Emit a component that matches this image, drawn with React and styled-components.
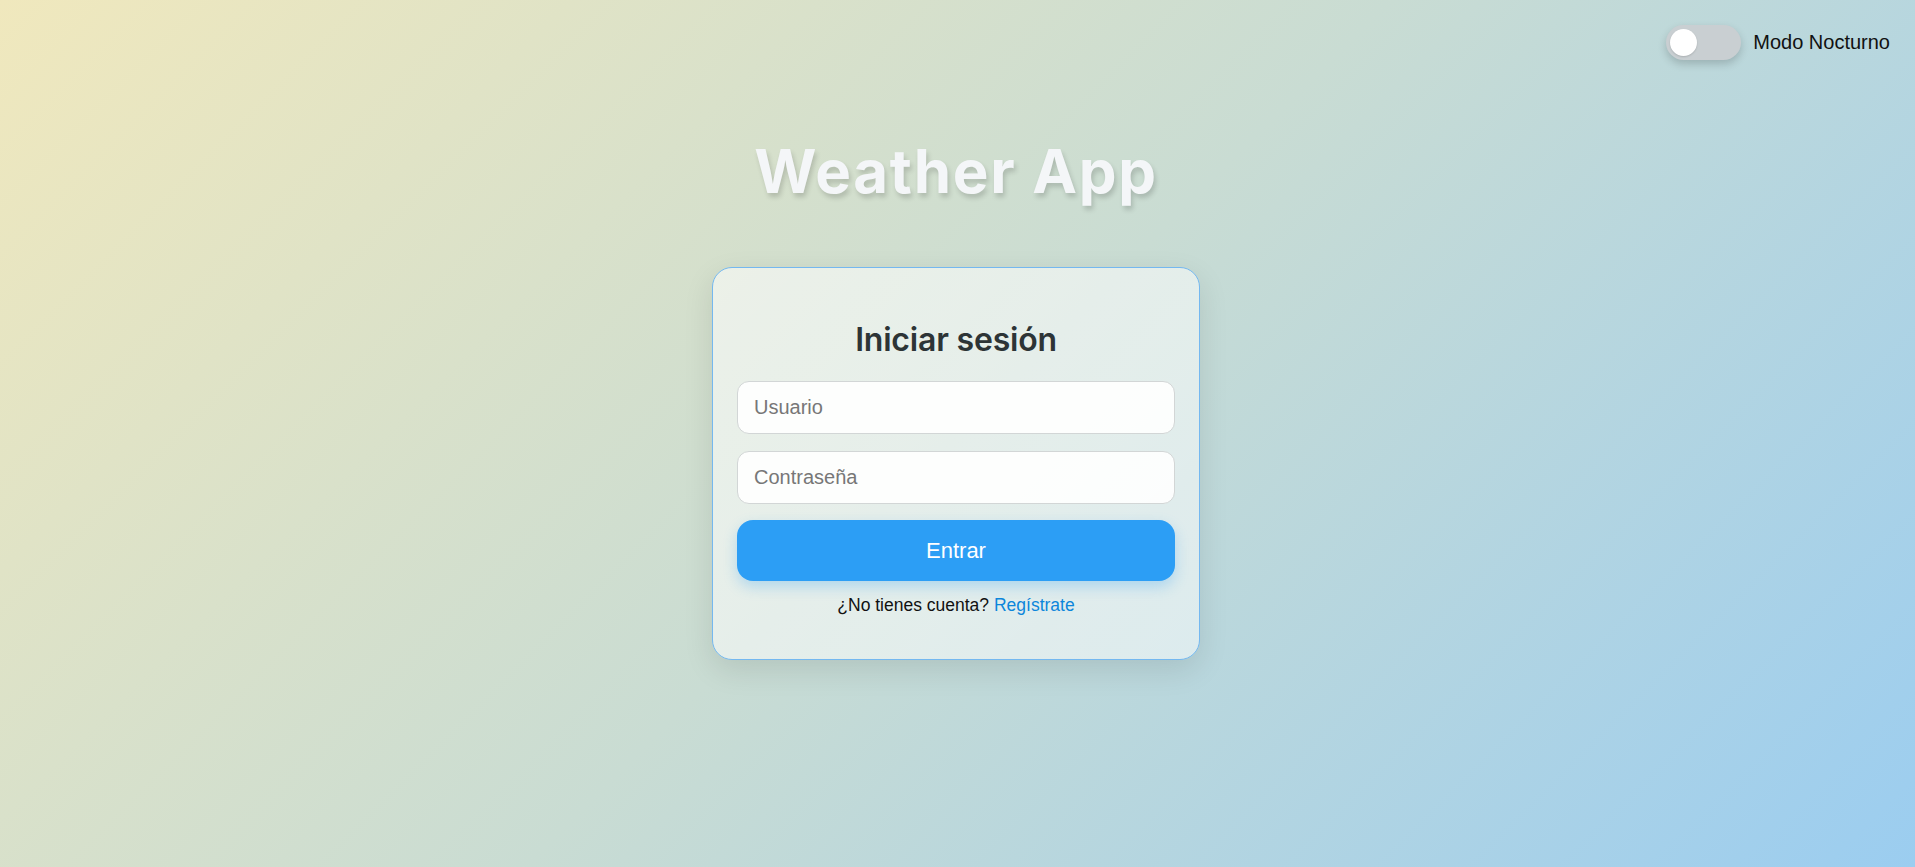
import React, { useState } from "react";
import styled, { createGlobalStyle } from "styled-components";

const GlobalStyle = createGlobalStyle`
  html, body {
    margin: 0;
    padding: 0;
  }
  body {
    font-family: "Liberation Sans", Arial, sans-serif;
  }
  * {
    box-sizing: border-box;
  }
`;

const Page = styled.div`
  min-height: 100vh;
  display: flex;
  flex-direction: column;
  background: linear-gradient(135deg, #f0e8bd 0%, #c9dcd3 50%, #9bcdf0 100%);
`;

const TopBar = styled.div`
  display: flex;
  justify-content: flex-end;
  align-items: center;
  gap: 12px;
  padding: 25px 25px 0 0;
`;

const Switch = styled.button`
  width: 75px;
  height: 35px;
  border: none;
  border-radius: 18px;
  padding: 0 4px;
  display: flex;
  align-items: center;
  justify-content: ${p => (p.on ? "flex-end" : "flex-start")};
  background: ${p => (p.on ? "#2b9ef5" : "#c9cfd2")};
  box-shadow: 0 4px 8px rgba(0, 0, 0, 0.18);
  cursor: pointer;
`;

const Knob = styled.span`
  width: 27px;
  height: 27px;
  border-radius: 50%;
  background: #ffffff;
  box-shadow: 0 1px 2px rgba(0, 0, 0, 0.15);
`;

const SwitchLabel = styled.span`
  font-size: 20px;
  color: #111;
`;

const Main = styled.main`
  display: flex;
  flex-direction: column;
  align-items: center;
  padding-right: 3px;
`;

const Title = styled.h1`
  margin: 81px 0 66px;
  font-family: Inter, "Open Sans", sans-serif;
  font-weight: 700;
  font-size: 60px;
  line-height: 60px;
  letter-spacing: 1.7px;
  color: #f4f6f8;
  text-shadow: 2px 4px 5px rgba(0, 0, 0, 0.16);
`;

const Card = styled.form`
  width: 488px;
  padding: 52px 24px 44px;
  display: flex;
  flex-direction: column;
  border: 1px solid #74b8f0;
  border-radius: 20px;
  background: linear-gradient(135deg, rgba(255, 255, 255, 0.55), rgba(255, 255, 255, 0.5));
  box-shadow: 0 10px 30px rgba(0, 0, 0, 0.1);
`;

const Heading = styled.h2`
  margin: 0 0 21px;
  text-align: center;
  font-family: Inter, "Open Sans", sans-serif;
  font-weight: 600;
  font-size: 32px;
  line-height: 40px;
  letter-spacing: -0.2px;
  color: #2d3436;
`;

const Field = styled.input`
  width: 100%;
  height: 53px;
  margin-bottom: ${p => p.gap}px;
  padding: 0 16px;
  border: 1px solid #d2d6d6;
  border-radius: 12px;
  background: rgba(255, 255, 255, 0.9);
  font-family: "Liberation Sans", Arial, sans-serif;
  font-size: 20px;
  color: #222;
  outline: none;
  &::placeholder {
    color: #777;
  }
`;

const SubmitButton = styled.button`
  width: 100%;
  height: 61px;
  border: none;
  border-radius: 16px;
  background: #2c9ef5;
  color: #fff;
  font-family: "Liberation Sans", Arial, sans-serif;
  font-size: 22px;
  box-shadow: 0 6px 14px rgba(44, 158, 245, 0.28);
  cursor: pointer;
`;

const Footnote = styled.p`
  margin: 14px 0 0;
  text-align: center;
  font-size: 17.5px;
  line-height: 20px;
  color: #111;
`;

const Link = styled.a`
  color: #0c86db;
  text-decoration: none;
`;

export default function App() {
  const [night, setNight] = useState(false);
  return (
    <Page>
      <GlobalStyle />
      <TopBar>
        <Switch type="button" on={night ? 1 : 0} onClick={() => setNight(!night)}>
          <Knob />
        </Switch>
        <SwitchLabel>Modo Nocturno</SwitchLabel>
      </TopBar>
      <Main>
        <Title>Weather App</Title>
        <Card onSubmit={e => e.preventDefault()}>
          <Heading>Iniciar sesión</Heading>
          <Field gap={17} placeholder="Usuario" />
          <Field gap={16} type="password" placeholder="Contraseña" />
          <SubmitButton type="submit">Entrar</SubmitButton>
          <Footnote>
            ¿No tienes cuenta? <Link href="#">Regístrate</Link>
          </Footnote>
        </Card>
      </Main>
    </Page>
  );
}
